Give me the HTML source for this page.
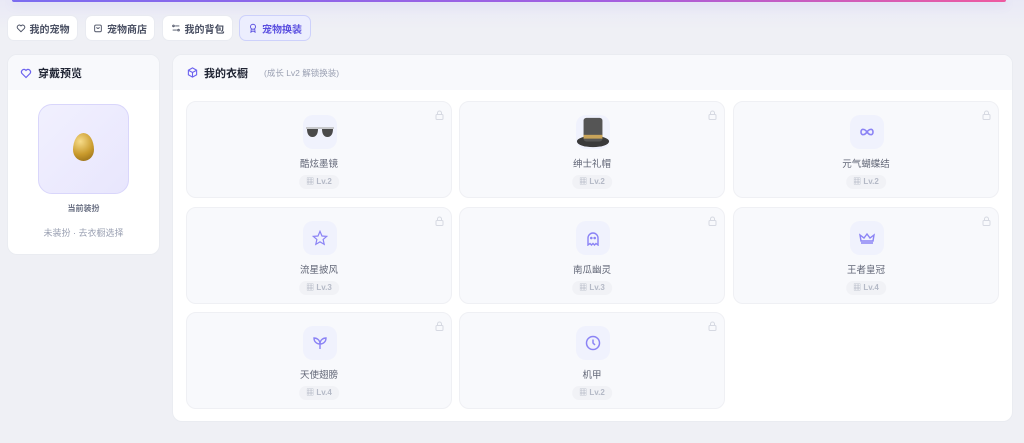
<!DOCTYPE html>
<html><head><meta charset="utf-8"><style>
*{margin:0;padding:0;box-sizing:border-box}
body{width:1024px;height:443px;overflow:hidden;background:linear-gradient(#e9e9f6 0,#eff0f5 30px);font-family:"Liberation Sans","Noto Sans CJK SC",sans-serif;position:relative}
.bar{position:absolute;left:12px;top:0;width:994px;height:2px;border-radius:0 0 3px 3px;background:linear-gradient(90deg,#7b6cf0,#a35ee0 60%,#ee5aa0);box-shadow:0 2px 10px rgba(120,110,230,.25)}
.tab{position:absolute;top:15px;height:26px;border-radius:7px;background:#fff;border:1px solid #e9ebf1;font-size:10px;font-weight:bold;color:#4a5063;display:flex;align-items:center;justify-content:center;gap:4px}
.tab.on{background:#eceefe;border-color:#cdd1fb;color:#5a4fe0}
.tab svg{width:10px;height:10px}
.panel{position:absolute;background:#fff;border:1px solid #eaecf1;border-radius:10px;overflow:hidden}
.ph{height:35px;background:#f8f9fc;display:flex;align-items:center;padding-left:12px;font-size:11px;font-weight:bold;color:#1f2433;gap:6px}
.ph small{font-size:8.5px;color:#9aa0b2;font-weight:normal;margin-left:10px}
.card{position:absolute;width:266px;height:97px;background:#f8f9fc;border:1px solid #eff0f4;border-radius:10px}
.ic{position:absolute;left:116px;top:13px;width:34px;height:34px;border-radius:10px;background:#f0f2fd;display:flex;align-items:center;justify-content:center}
.nm{position:absolute;top:54px;width:100%;text-align:center;font-size:9.5px;color:#626777}
.lv{position:absolute;top:73px;left:50%;transform:translateX(-50%);height:14px;padding:0 7px;border-radius:7px;background:#f1f2f6;font-size:8px;color:#b4b9c6;font-weight:bold;line-height:14px;white-space:nowrap}
.lk{position:absolute;right:7px;top:8px}
</style></head><body>
<div class="bar"></div>
<div class="tab" style="left:7px;width:71px"><svg viewBox="0 0 24 24" fill="none" stroke="#4a5063" stroke-width="2.2"><path d="M12 21l-8-8a5 5 0 017-7l1 1 1-1a5 5 0 017 7z"/></svg>我的宠物</div>
<div class="tab" style="left:85px;width:70px"><svg viewBox="0 0 24 24" fill="none" stroke="#4a5063" stroke-width="2.2"><rect x="4" y="5" width="16" height="16" rx="3"/><path d="M9 10a3 3 0 006 0"/></svg>宠物商店</div>
<div class="tab" style="left:162px;width:71px"><svg viewBox="0 0 24 24" fill="none" stroke="#4a5063" stroke-width="2.2"><circle cx="6" cy="7" r="2"/><path d="M10 7h10M4 17h10"/><circle cx="18" cy="17" r="2"/></svg>我的背包</div>
<div class="tab on" style="left:239px;width:72px"><svg viewBox="0 0 24 24" fill="none" stroke="#5a4fe0" stroke-width="2.2"><circle cx="12" cy="9" r="6"/><path d="M8 14l-1 8 5-3 5 3-1-8"/></svg>宠物换装</div>

<div class="panel" style="left:7px;top:54px;width:153px;height:201px">
<div class="ph"><svg width="12" height="12" viewBox="0 0 24 24" fill="none" stroke="#6c63ef" stroke-width="2.4"><path d="M12 21l-8-8a5 5 0 017-7l1 1 1-1a5 5 0 017 7z"/></svg>穿戴预览</div>
<div style="position:absolute;left:30px;top:49px;width:91px;height:90px;border-radius:14px;background:linear-gradient(135deg,#f1f0fe,#e8e6fd);border:1px solid #d9d6fb"></div>
<div style="position:absolute;left:65px;top:78px;width:21px;height:28px;border-radius:50% 50% 50% 50%/60% 60% 40% 40%;background:radial-gradient(circle at 35% 30%,#f7dc8a,#c99a2c 55%,#8a6415)"></div>
<div style="position:absolute;top:148px;width:100%;text-align:center;font-size:8px;color:#6a7083;font-weight:bold">当前装扮</div>
<div style="position:absolute;top:171px;width:100%;text-align:center;font-size:9px;color:#9aa0b2">未装扮 · 去衣橱选择</div>
</div>

<div class="panel" style="left:172px;top:54px;width:841px;height:368px">
<div class="ph" style="padding-left:14px"><svg width="11" height="11" viewBox="0 0 24 24" fill="none" stroke="#6c63ef" stroke-width="2.4"><path d="M12 2l9 5v10l-9 5-9-5V7z M3 7l9 5 9-5 M12 12v10"/></svg>我的衣橱<small>(成长 Lv2 解锁换装)</small></div>
</div>

<div class="card" style="left:186px;top:101px"><div class="ic"><svg width="30" height="14" viewBox="0 0 30 14"><path d="M1 3h28" stroke="#bbb" stroke-width="1.5"/><path d="M2 4h11c0 5-2 8-5.5 8S2 9 2 4zM17 4h11c0 5-2 8-5.5 8S17 9 17 4z" fill="#4a4a4a"/></svg></div><div class="nm">酷炫墨镜</div><div class="lv">▦ Lv.2</div><svg class="lk" width="9" height="10" viewBox="0 0 9 10" fill="none" stroke="#d6d9e2"><rect x="1" y="4.5" width="7" height="5" rx="1"/><path d="M2.5 4.5V3a2 2 0 014 0v1.5"/></svg></div>
<div class="card" style="left:459px;top:101px"><div class="ic"><svg width="36" height="36" viewBox="0 0 36 36"><ellipse cx="18" cy="28" rx="17" ry="6" fill="#3a3a3a"/><rect x="8" y="3" width="20" height="25" rx="3" fill="#555"/><rect x="8" y="21" width="20" height="4" fill="#c9a45a"/></svg></div><div class="nm">绅士礼帽</div><div class="lv">▦ Lv.2</div><svg class="lk" width="9" height="10" viewBox="0 0 9 10" fill="none" stroke="#d6d9e2"><rect x="1" y="4.5" width="7" height="5" rx="1"/><path d="M2.5 4.5V3a2 2 0 014 0v1.5"/></svg></div>
<div class="card" style="left:733px;top:101px"><div class="ic"><svg width="16" height="10" viewBox="0 0 16 10" fill="none" stroke="#8b83f5" stroke-width="1.6"><path d="M8 5C6 2 2 1 2 5s4 3 6 0c2-3 6-4 6 0s-4 3-6 0z"/></svg></div><div class="nm">元气蝴蝶结</div><div class="lv">▦ Lv.2</div><svg class="lk" width="9" height="10" viewBox="0 0 9 10" fill="none" stroke="#d6d9e2"><rect x="1" y="4.5" width="7" height="5" rx="1"/><path d="M2.5 4.5V3a2 2 0 014 0v1.5"/></svg></div>

<div class="card" style="left:186px;top:207px"><div class="ic"><svg width="16" height="16" viewBox="0 0 24 24" fill="none" stroke="#8b83f5" stroke-width="1.8"><path d="M12 2l3 7 7 .6-5.3 4.6 1.6 7.3L12 17.8 5.7 21.5l1.6-7.3L2 9.6 9 9z"/></svg></div><div class="nm">流星披风</div><div class="lv">▦ Lv.3</div><svg class="lk" width="9" height="10" viewBox="0 0 9 10" fill="none" stroke="#d6d9e2"><rect x="1" y="4.5" width="7" height="5" rx="1"/><path d="M2.5 4.5V3a2 2 0 014 0v1.5"/></svg></div>
<div class="card" style="left:459px;top:207px"><div class="ic"><svg width="14" height="15" viewBox="0 0 14 15" fill="none" stroke="#8b83f5" stroke-width="1.4"><path d="M2 14V7a5 5 0 0110 0v7l-2-1.5L8.5 14 7 12.5 5.5 14 4 12.5z"/><circle cx="5.3" cy="7" r=".6" fill="#8b83f5"/><circle cx="8.7" cy="7" r=".6" fill="#8b83f5"/></svg></div><div class="nm">南瓜幽灵</div><div class="lv">▦ Lv.3</div><svg class="lk" width="9" height="10" viewBox="0 0 9 10" fill="none" stroke="#d6d9e2"><rect x="1" y="4.5" width="7" height="5" rx="1"/><path d="M2.5 4.5V3a2 2 0 014 0v1.5"/></svg></div>
<div class="card" style="left:733px;top:207px"><div class="ic"><svg width="16" height="12" viewBox="0 0 16 12" fill="none" stroke="#8b83f5" stroke-width="1.4"><path d="M2 9L1 3l4 3 3-4 3 4 4-3-1 6zM2 11h12"/></svg></div><div class="nm">王者皇冠</div><div class="lv">▦ Lv.4</div><svg class="lk" width="9" height="10" viewBox="0 0 9 10" fill="none" stroke="#d6d9e2"><rect x="1" y="4.5" width="7" height="5" rx="1"/><path d="M2.5 4.5V3a2 2 0 014 0v1.5"/></svg></div>

<div class="card" style="left:186px;top:312px"><div class="ic"><svg width="14" height="14" viewBox="0 0 14 14" fill="none" stroke="#8b83f5" stroke-width="1.4"><path d="M7 13V8M7 8C7 4 4 2 1 2c0 4 3 6 6 6zM7 8c0-4 3-6 6-6 0 4-3 6-6 6z"/></svg></div><div class="nm">天使翅膀</div><div class="lv">▦ Lv.4</div><svg class="lk" width="9" height="10" viewBox="0 0 9 10" fill="none" stroke="#d6d9e2"><rect x="1" y="4.5" width="7" height="5" rx="1"/><path d="M2.5 4.5V3a2 2 0 014 0v1.5"/></svg></div>
<div class="card" style="left:459px;top:312px"><div class="ic"><svg width="16" height="16" viewBox="0 0 16 16" fill="none" stroke="#8b83f5" stroke-width="1.5"><circle cx="8" cy="8" r="6.5"/><path d="M8 4.5V8l2 2"/></svg></div><div class="nm">机甲</div><div class="lv">▦ Lv.2</div><svg class="lk" width="9" height="10" viewBox="0 0 9 10" fill="none" stroke="#d6d9e2"><rect x="1" y="4.5" width="7" height="5" rx="1"/><path d="M2.5 4.5V3a2 2 0 014 0v1.5"/></svg></div>
</body></html>
